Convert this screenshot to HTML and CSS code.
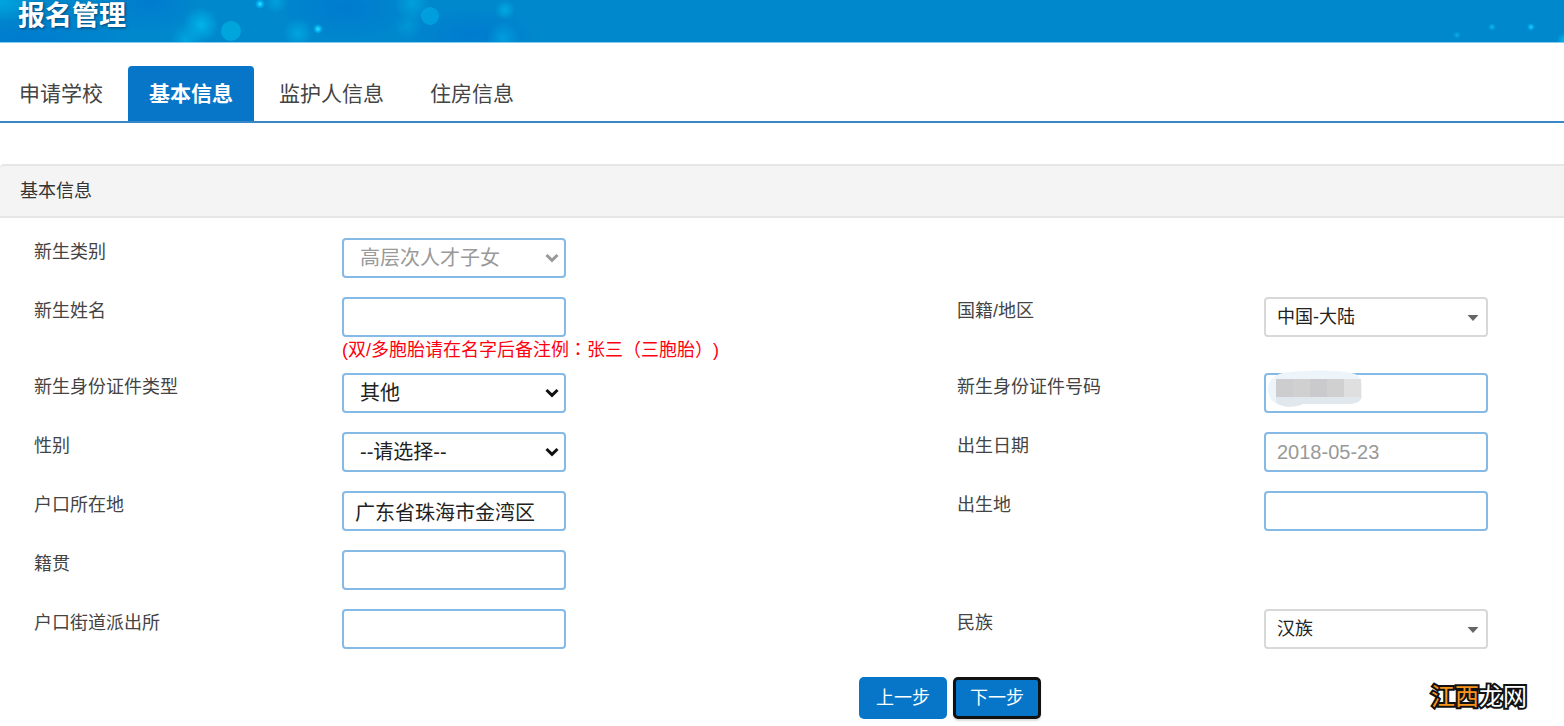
FILE: index.html
```html
<!DOCTYPE html>
<html lang="zh-CN">
<head>
<meta charset="utf-8">
<meta name="viewport" content="width=device-width, initial-scale=1">
<title>报名管理</title>
<link rel="stylesheet" href="styles.css">
</head>
<body>
<header class="banner">
  <svg class="banner-art" width="1564" height="42" viewBox="0 0 1564 42" aria-hidden="true">
    <defs>
      <radialGradient id="glow"><stop offset="0" stop-color="#00b8ec"/><stop offset="1" stop-color="#00b8ec" stop-opacity="0"/></radialGradient>
      <radialGradient id="deep"><stop offset="0" stop-color="#0078d0" stop-opacity=".8"/><stop offset="1" stop-color="#0078d0" stop-opacity="0"/></radialGradient>
      <radialGradient id="spark"><stop offset="0" stop-color="#3fe4ff"/><stop offset=".5" stop-color="#00b4f4"/><stop offset="1" stop-color="#00b4f4" stop-opacity="0"/></radialGradient>
    </defs>
    <ellipse cx="20" cy="40" rx="110" ry="30" fill="url(#deep)"/>
    <ellipse cx="150" cy="0" rx="50" ry="34" fill="url(#deep)"/>
    <ellipse cx="345" cy="8" rx="70" ry="34" fill="url(#deep)"/>
    <ellipse cx="470" cy="34" rx="70" ry="26" fill="url(#deep)"/>
    <ellipse cx="0" cy="2" rx="44" ry="20" fill="url(#glow)" opacity=".6"/>
    <circle cx="201" cy="25" r="18" fill="url(#glow)" opacity=".9"/>
    <circle cx="186" cy="40" r="16" fill="url(#glow)" opacity=".6"/>
    <circle cx="231" cy="31" r="10" fill="#00b0e0" opacity=".75"/>
    <circle cx="298" cy="33" r="15" fill="url(#glow)" opacity=".6"/>
    <circle cx="276" cy="2" r="12" fill="url(#glow)" opacity=".5"/>
    <circle cx="430" cy="16" r="9" fill="#00a8e4" opacity=".7"/>
    <circle cx="412" cy="3" r="18" fill="url(#glow)" opacity=".5"/>
    <circle cx="408" cy="26" r="14" fill="url(#glow)" opacity=".3"/>
    <circle cx="505" cy="10" r="10" fill="url(#glow)" opacity=".7"/>
    <circle cx="503" cy="38" r="16" fill="url(#glow)" opacity=".5"/>
    <circle cx="260" cy="4" r="5" fill="url(#spark)"/>
    <circle cx="318" cy="29" r="5" fill="url(#spark)"/>
    <circle cx="1492" cy="27" r="4" fill="url(#spark)" opacity=".5"/>
    <circle cx="1531" cy="27" r="4" fill="url(#spark)" opacity=".8"/>
    <circle cx="1457" cy="35" r="4" fill="url(#spark)" opacity=".4"/>
    <circle cx="1564" cy="40" r="7" fill="url(#glow)"/>
  </svg>
  <h1 class="banner-title">报名管理</h1>
</header>

<nav class="tabs" aria-label="报名步骤">
  <a class="tab" href="#school">申请学校</a>
  <a class="tab tab-active" href="#basic" aria-current="page">基本信息</a>
  <a class="tab" href="#guardian">监护人信息</a>
  <a class="tab" href="#housing">住房信息</a>
</nav>

<main class="panel" id="basic">
  <h2 class="panel-heading">基本信息</h2>
  <form class="form">
    <div class="row">
      <label class="label" for="category">新生类别</label>
      <div class="field">
        <div class="control">
          <select class="box box-select" id="category" disabled><option>高层次人才子女</option></select>
          <svg class="chevron chevron-muted" width="14" height="10" viewBox="0 0 14 10" aria-hidden="true"><path d="M1.5 2 7 7.3 12.5 2"/></svg>
        </div>
      </div>
    </div>
    <div class="row">
      <label class="label" for="name">新生姓名</label>
      <div class="field">
        <div class="control"><input class="box" id="name" type="text" aria-describedby="name-hint"></div>
        <p class="hint" id="name-hint">(双/多胞胎请在名字后备注例<span class="mark" lang="zh-TW">：</span>张三<span class="mark" lang="zh-TW">（</span>三胞胎<span class="mark" lang="zh-TW">）</span>)</p>
      </div>
      <label class="label" for="region">国籍/地区</label>
      <div class="field">
        <div class="control">
          <select class="box box-combo" id="region"><option>中国-大陆</option></select>
          <svg class="caret" width="12" height="6" viewBox="0 0 12 6" aria-hidden="true"><path d="M.5 0h11L6 6z"/></svg>
        </div>
      </div>
    </div>
    <div class="row">
      <label class="label" for="id-type">新生身份证件类型</label>
      <div class="field">
        <div class="control">
          <select class="box box-select" id="id-type"><option>其他</option></select>
          <svg class="chevron" width="14" height="10" viewBox="0 0 14 10" aria-hidden="true"><path d="M1.5 2 7 7.3 12.5 2"/></svg>
        </div>
      </div>
      <label class="label" for="id-number">新生身份证件号码</label>
      <div class="field">
        <div class="control">
          <input class="box" id="id-number" type="text">
          <svg class="redaction" width="96" height="38" viewBox="0 0 96 38" aria-hidden="true">
            <path d="M16 3C30 0 75-1 88 4c7 3 7 10 7 18 0 8-5 12-14 12H36c-6 3-16 4-23 1C5 33 1 27 1 19 1 11 7 5 16 3z" fill="#edf5fb"/>
            <path d="M9 26h86c-1 6-6 8-14 8H36c-6 3-16 4-23 1-2-1-4-2-4-4z" fill="#e0e8ed"/>
            <path d="M9 9h17v18H9z" fill="#cdcdcf"/>
            <path d="M26 9h17v18H26z" fill="#d0d0d1"/>
            <path d="M43 9h17v18H43z" fill="#cacacc"/>
            <path d="M60 9h17v18H60z" fill="#d0d0d0"/>
            <path d="M77 9h17v18H77z" fill="#dfdfe0"/>
          </svg>
        </div>
      </div>
    </div>
    <div class="row">
      <label class="label" for="gender">性别</label>
      <div class="field">
        <div class="control">
          <select class="box box-select" id="gender"><option>--请选择--</option></select>
          <svg class="chevron" width="14" height="10" viewBox="0 0 14 10" aria-hidden="true"><path d="M1.5 2 7 7.3 12.5 2"/></svg>
        </div>
      </div>
      <label class="label" for="birthday">出生日期</label>
      <div class="field">
        <div class="control"><input class="box box-muted" id="birthday" type="text" value="2018-05-23" readonly></div>
      </div>
    </div>
    <div class="row">
      <label class="label" for="residence">户口所在地</label>
      <div class="field">
        <div class="control"><input class="box" id="residence" type="text" value="广东省珠海市金湾区"></div>
      </div>
      <label class="label" for="birthplace">出生地</label>
      <div class="field">
        <div class="control"><input class="box" id="birthplace" type="text"></div>
      </div>
    </div>
    <div class="row">
      <label class="label" for="origin">籍贯</label>
      <div class="field">
        <div class="control"><input class="box" id="origin" type="text"></div>
      </div>
    </div>
    <div class="row">
      <label class="label" for="police">户口街道派出所</label>
      <div class="field">
        <div class="control"><input class="box" id="police" type="text"></div>
      </div>
      <label class="label" for="ethnicity">民族</label>
      <div class="field">
        <div class="control">
          <select class="box box-combo" id="ethnicity"><option>汉族</option></select>
          <svg class="caret" width="12" height="6" viewBox="0 0 12 6" aria-hidden="true"><path d="M.5 0h11L6 6z"/></svg>
        </div>
      </div>
    </div>
    <div class="actions">
      <button class="btn" type="button">上一步</button>
      <button class="btn btn-current" type="button">下一步</button>
    </div>
  </form>
</main>
<div class="watermark"><span class="watermark-warm">江西</span>龙网</div>
</body>
</html>
```
FILE: styles.css
```css
* {
  box-sizing: border-box;
}

body {
  margin: 0;
  position: relative;
  background: #fff;
  color: #444;
  font-family: "Liberation Sans", "Noto Sans CJK SC", sans-serif;
  font-size: 18px;
  overflow-x: hidden;
}

.banner {
  position: relative;
  height: 43px;
  padding-left: 18px;
  overflow: hidden;
  background: #0088cc;
  border-bottom: 1px solid #85cdec;
}

.banner-art {
  position: absolute;
  top: 0;
  left: 0;
}

.banner-title {
  position: relative;
  margin: 0;
  color: #fff;
  font-size: 27px;
  line-height: 32px;
  text-shadow: 1px 1px 3px rgba(0, 40, 80, 0.7);
}

.tabs {
  display: flex;
  gap: 4px;
  margin-left: -2px;
  padding-top: 23px;
  border-bottom: 2px solid #3a87c8;
}

.tab {
  padding: 0 21px;
  border-radius: 4px 4px 0 0;
  color: #444;
  font-size: 21px;
  line-height: 55px;
  text-decoration: none;
}

.tab-active {
  background: #0776c9;
  color: #fff;
  font-weight: bold;
}

.panel {
  margin-top: 41px;
}

.panel-heading {
  margin: 0;
  padding-left: 20px;
  background: #f4f4f4;
  border-top: 2px solid #e6e6e6;
  border-bottom: 2px solid #e6e6e6;
  border-top-left-radius: 4px;
  color: #333;
  font-size: 18px;
  font-weight: normal;
  line-height: 50px;
}

.form {
  padding: 20px 0 0 34px;
}

.row {
  display: grid;
  grid-template-columns: 308fr 615fr 307fr 300fr;
  align-items: start;
  margin-bottom: 19px;
}

.label {
  line-height: 28px;
}

.control {
  position: relative;
  width: 224px;
}

.box {
  display: block;
  width: 100%;
  height: 40px;
  margin: 0;
  padding: 0 11px;
  appearance: none;
  background: #fff;
  border: 2px solid #85b9e6;
  border-radius: 4px;
  color: #222;
  font-family: inherit;
  font-size: 20px;
  opacity: 1;
}

.box-select {
  padding: 0 16px;
}

.box-select:disabled,
.box-muted {
  color: #999;
}

.box-combo {
  padding: 0 11px;
  border-color: #d8d8d8;
  font-size: 18px;
}

.chevron {
  position: absolute;
  top: 15px;
  right: 7px;
  fill: none;
  stroke: #111;
  stroke-width: 3;
  pointer-events: none;
}

.chevron-muted {
  stroke: #999;
}

.caret {
  position: absolute;
  top: 18px;
  right: 9px;
  fill: #666;
  pointer-events: none;
}

.redaction {
  position: absolute;
  top: -3px;
  left: 3px;
  pointer-events: none;
}

.hint {
  margin: 0 0 -9px;
  color: #ff0010;
  line-height: 26px;
  text-spacing-trim: space-all;
}

.mark {
  font-family: "Noto Sans CJK TC", sans-serif;
  line-height: 1;
}

.actions {
  display: flex;
  justify-content: center;
  gap: 6px;
  margin-top: 28px;
  padding: 0 0 6px 302px;
}

.btn {
  height: 42px;
  padding: 0 17px 5px;
  background: #0776c9;
  border: 0;
  border-radius: 5px;
  color: #fff;
  font-family: inherit;
  font-size: 18px;
}

.btn-current {
  border: 3px solid #111;
  padding: 0 14px 5px;
  box-shadow: 0 2px 2px #ddd;
}

.watermark {
  position: absolute;
  right: 37px;
  bottom: 12px;
  color: #fff;
  font-family: "Noto Sans CJK SC", sans-serif;
  font-size: 24px;
  line-height: 36px;
  -webkit-text-stroke: 4px #111;
  paint-order: stroke fill;
}

.watermark-warm {
  color: #f7941d;
}
```
